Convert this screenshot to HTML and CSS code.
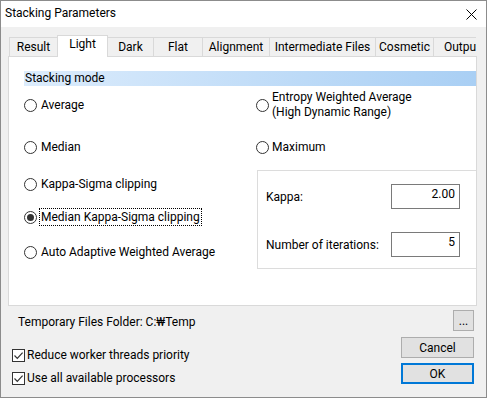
FILE: index.html
```html
<!DOCTYPE html>
<html>
<head>
<meta charset="utf-8">
<link rel="stylesheet" href="styles.css">
</head>
<body>
<div class="window">
  <div class="titlebar">
    <span class="title">Stacking Parameters</span>
    <svg class="close" viewBox="0 0 11 11" width="11" height="11"><path d="M0.5 0.5L10.5 10.5M10.5 0.5L0.5 10.5" stroke="#000" stroke-width="1" fill="none"/></svg>
  </div>
  <div class="client">
    <div class="tabs">
      <div class="tab tab-result">Result</div>
      <div class="tab tab-light active">Light</div>
      <div class="tab tab-dark">Dark</div>
      <div class="tab tab-flat">Flat</div>
      <div class="tab tab-align">Alignment</div>
      <div class="tab tab-inter">Intermediate Files</div>
      <div class="tab tab-cosm">Cosmetic</div>
      <div class="tab tab-out">Output</div>
    </div>
    <div class="panel">
      <div class="section">Stacking mode</div>
      <div class="modes">
        <div class="col-left">
          <label class="radio r-average"><span class="circle"></span><span class="text">Average</span></label>
          <label class="radio r-median"><span class="circle"></span><span class="text">Median</span></label>
          <label class="radio r-ks"><span class="circle"></span><span class="text">Kappa-Sigma clipping</span></label>
          <label class="radio r-mks checked"><span class="circle"></span><span class="text focus">Median Kappa-Sigma clipping</span></label>
          <label class="radio r-aa"><span class="circle"></span><span class="text">Auto Adaptive Weighted Average</span></label>
        </div>
        <div class="col-right">
          <label class="radio r-entropy"><span class="circle"></span><span class="text two">Entropy Weighted Average<br>(High Dynamic Range)</span></label>
          <label class="radio r-max"><span class="circle"></span><span class="text">Maximum</span></label>
          <div class="group">
            <div class="field"><span>Kappa:</span><input class="edit" type="text" value="2.00"></div>
            <div class="field"><span>Number of iterations:</span><input class="edit" type="text" value="5"></div>
          </div>
        </div>
      </div>
    </div>
    <div class="footer">
      <div class="footer-left">
        <div class="folder">Temporary Files Folder: C:₩Temp</div>
        <label class="check c-first"><span class="box"><svg viewBox="0 0 11 11" width="11" height="11"><path d="M1.5 5.5L4.3 8.3L9.6 2.6" stroke="#333" stroke-width="1.2" fill="none"/></svg></span><span>Reduce worker threads priority</span></label>
        <label class="check c-second"><span class="box"><svg viewBox="0 0 11 11" width="11" height="11"><path d="M1.5 5.5L4.3 8.3L9.6 2.6" stroke="#333" stroke-width="1.2" fill="none"/></svg></span><span>Use all available processors</span></label>
      </div>
      <div class="footer-right">
        <button class="btn btn-more">...</button>
        <button class="btn btn-wide btn-cancel">Cancel</button>
        <button class="btn btn-wide btn-ok">OK</button>
      </div>
    </div>
  </div>
</div>
</body>
</html>
```

FILE: styles.css
```css
* { box-sizing: border-box; }
html, body { margin: 0; padding: 0; }
body {
  width: 487px;
  height: 398px;
  overflow: hidden;
  background: #f0f0f0;
  font-family: Roboto, "Noto Sans", sans-serif;
  font-size: 12px;
  color: #000;
}
.window {
  width: 487px;
  height: 398px;
  border: 1px solid #8c8c8c;
  background: #f0f0f0;
  display: flex;
  flex-direction: column;
}
.titlebar {
  height: 26px;
  flex: none;
  background: #fff;
  display: flex;
  align-items: center;
  justify-content: space-between;
  padding: 0 9px 0 4px;
}
.title { line-height: 16px; margin-top: -2px; }
.close { display: block; }
.client { flex: 1; display: flex; flex-direction: column; }

/* tabs */
.tabs {
  position: relative;
  z-index: 1;
  display: flex;
  align-items: flex-start;
  margin: 8px 0 0 8px;
  width: 467px;
  height: 22px;
  overflow: hidden;
}
.tab {
  flex: none;
  height: 19px;
  margin-top: 2px;
  margin-right: -1px;
  border: 1px solid #d9d9d9;
  border-bottom: none;
  background: #f0f0f0;
  text-align: center;
  line-height: 18px;
  white-space: nowrap;
}
.tab.active {
  position: relative;
  z-index: 1;
  height: 22px;
  margin-top: 0;
  background: #fff;
  line-height: 17px;
}
.tab-result { width: 49px; }
.tab-light { width: 51px; }
.tab-dark { width: 47px; }
.tab-flat { width: 50px; }
.tab-align { width: 68px; }
.tab-inter { width: 107px; }
.tab-cosm { width: 59px; }
.tab-out { width: 60px; text-align: left; padding-left: 10px; }

/* panel */
.panel {
  margin: -1px 0 0 7px;
  width: 469px;
  height: 250px;
  flex: none;
  background: #fff;
  border: 1px solid #d9d9d9;
  overflow: hidden;
  padding: 14px 0 0 15px;
}
.section {
  height: 15px;
  line-height: 15px;
  padding-left: 1px;
  background: linear-gradient(to right, #dcecfc, #a9cff4);
}
.modes { display: flex; }
.col-left {
  width: 232px;
  flex: none;
  display: flex;
  flex-direction: column;
  align-items: flex-start;
}
.col-right {
  flex: 1;
  min-width: 0;
  display: flex;
  flex-direction: column;
  align-items: flex-start;
}
.radio {
  display: flex;
  align-items: center;
  gap: 2px;
  line-height: 16px;
  white-space: nowrap;
}
.circle {
  flex: none;
  width: 13px;
  height: 13px;
  border: 1px solid #333;
  border-radius: 50%;
  background: #fff;
  display: flex;
  align-items: center;
  justify-content: center;
}
.radio.checked .circle::after {
  content: "";
  width: 7px;
  height: 7px;
  border-radius: 50%;
  background: #333;
}
.text { border: 1px solid transparent; padding: 0 1px; }
.text.focus { border: 1px dotted #000; }
.text.two { line-height: 15px; }
.col-right .radio { gap: 1px; }

.r-average { margin-top: 10px; }
.r-median { margin-top: 24px; }
.r-ks { margin-top: 19px; }
.r-mks { margin-top: 15px; }
.r-aa { margin-top: 17px; }
.r-entropy { margin-top: 3px; }
.r-max { margin-top: 17px; }

.group {
  margin-top: 14px;
  margin-left: 1px;
  width: 228px;
  border: 1px solid #dcdcdc;
  padding: 13px 24px 11px 8px;
  display: flex;
  flex-direction: column;
  gap: 23px;
}
.field {
  display: flex;
  align-items: center;
  justify-content: space-between;
  line-height: 16px;
}
.edit {
  width: 69px;
  height: 25px;
  margin: 0;
  border: 1px solid #7a7a7a;
  background: #fff;
  padding: 1px 4px 7px;
  font: inherit;
  color: #000;
  text-align: right;
  outline: none;
}

/* footer */
.footer {
  display: flex;
  justify-content: space-between;
  padding-right: 12px;
}
.footer-left {
  padding-top: 8px;
  display: flex;
  flex-direction: column;
  align-items: flex-start;
}
.folder { padding-left: 17px; line-height: 16px; }
.check {
  display: flex;
  align-items: center;
  gap: 2px;
  margin-left: 11px;
  line-height: 16px;
}
.c-first { margin-top: 17px; }
.c-second { margin-top: 7px; }
.box {
  width: 13px;
  height: 13px;
  border: 1px solid #333;
  background: #fff;
  display: flex;
  align-items: center;
  justify-content: center;
}
.box svg { display: block; }
.footer-right {
  padding-top: 4px;
  display: flex;
  flex-direction: column;
  align-items: flex-end;
}
.btn {
  height: 21px;
  margin: 0;
  padding: 0;
  background: #e1e1e1;
  border: 1px solid #adadad;
  font: inherit;
  color: #000;
  line-height: 16px;
}
.btn-more { width: 21px; }
.btn-wide { width: 73px; }
.btn-cancel { margin-top: 6px; }
.btn-ok { margin-top: 5px; border: 2px solid #0078d7; }
```
